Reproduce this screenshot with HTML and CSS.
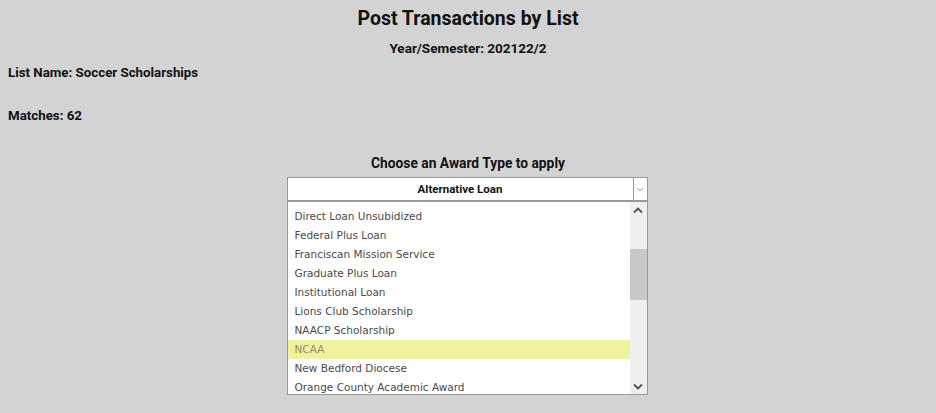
FILE: index.html
```html
<!DOCTYPE html>
<html>
<head>
<meta charset="utf-8">
<link rel="stylesheet" href="styles.css">
</head>
<body>
<h1 class="title">Post Transactions by List</h1>
<div class="sub">Year/Semester: 202122/2</div>
<div class="info">List Name: Soccer Scholarships</div>
<div class="info matches">Matches: 62</div>
<div class="choose">Choose an Award Type to apply</div>
<div class="picker">
  <div class="select">
    <div class="select-value">Alternative Loan</div>
    <div class="select-arrow">
      <svg width="8" height="5" viewBox="0 0 8 5"><path d="M1 1 L4 4 L7 1" fill="none" stroke="#a0a0a0" stroke-width="1"/></svg>
    </div>
  </div>
  <div class="listbox">
    <div class="options">
      <div class="opt">Direct Loan Unsubidized</div>
      <div class="opt">Federal Plus Loan</div>
      <div class="opt">Franciscan Mission Service</div>
      <div class="opt">Graduate Plus Loan</div>
      <div class="opt">Institutional Loan</div>
      <div class="opt">Lions Club Scholarship</div>
      <div class="opt">NAACP Scholarship</div>
      <div class="opt hl">NCAA</div>
      <div class="opt">New Bedford Diocese</div>
      <div class="opt">Orange County Academic Award</div>
    </div>
    <div class="scrollbar">
      <div class="sb-btn"><svg width="10" height="7" viewBox="0 0 10 7"><path d="M1 5.5 L5 1.5 L9 5.5" fill="none" stroke="#505050" stroke-width="1.8"/></svg></div>
      <div class="sb-track"><div class="sb-thumb"></div></div>
      <div class="sb-btn"><svg width="10" height="7" viewBox="0 0 10 7"><path d="M1 1.5 L5 5.5 L9 1.5" fill="none" stroke="#505050" stroke-width="1.8"/></svg></div>
    </div>
  </div>
</div>
</body>
</html>
```
FILE: styles.css
```css
html, body {
  margin: 0;
  padding: 0;
}
body {
  background: #d3d3d3;
  font-family: Roboto, "DejaVu Sans", sans-serif;
  color: #111;
  height: 413px;
  overflow: hidden;
}
.title {
  margin: 0;
  padding-top: 7px;
  height: 24px;
  line-height: 24px;
  font-size: 19.5px;
  font-weight: bold;
  text-align: center;
}
.sub {
  margin-top: 9px;
  height: 16px;
  line-height: 16px;
  font-size: 13.5px;
  font-weight: bold;
  text-align: center;
}
.info {
  margin-top: 9px;
  padding-left: 8px;
  height: 16px;
  line-height: 16px;
  font-size: 13.3px;
  font-weight: bold;
}
.matches {
  margin-top: 27px;
}
.choose {
  margin-top: 31px;
  height: 16px;
  line-height: 16px;
  font-size: 13.8px;
  font-weight: bold;
  text-align: center;
}
.picker {
  margin: 6px auto 0;
  width: 361px;
  transform: translateX(-1px);
}
.select {
  display: flex;
  height: 22px;
  border: 1px solid #999;
  border-bottom-width: 2px;
  background: #fff;
}
.select-value {
  flex: 1;
  text-align: center;
  font-size: 11.5px;
  font-weight: bold;
  line-height: 23px;
}
.select-arrow {
  width: 13px;
  border-left: 1px solid #999;
  display: flex;
  align-items: center;
  justify-content: center;
}
.listbox {
  display: flex;
  height: 192px;
  border: 1px solid #999;
  border-top: none;
  background: #fff;
  overflow: hidden;
}
.options {
  flex: 1;
  padding-top: 5px;
}
.opt {
  height: 19px;
  line-height: 19px;
  padding-left: 7px;
  font-family: "DejaVu Sans", sans-serif;
  font-size: 10.5px;
  color: #4a4a4a;
  white-space: nowrap;
}
.opt.hl {
  background: #eef39c;
  color: #8e8e74;
}
.scrollbar {
  width: 17px;
  background: #f0f0f0;
  display: flex;
  flex-direction: column;
}
.sb-btn {
  height: 16px;
  display: flex;
  align-items: center;
  justify-content: center;
}
.sb-track {
  flex: 1;
  padding-top: 31px;
}
.sb-thumb {
  height: 51px;
  background: #c8c8c8;
}
```
